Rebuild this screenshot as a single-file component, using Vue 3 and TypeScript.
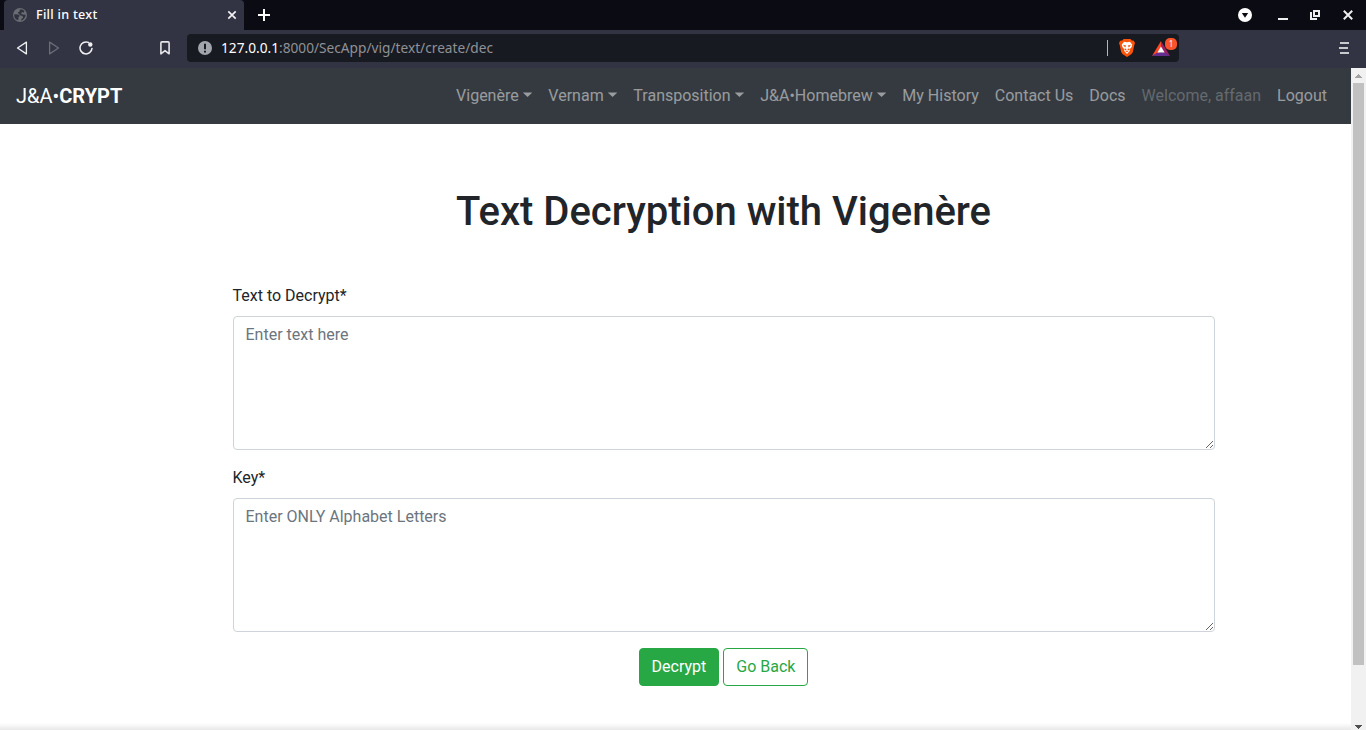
<script setup lang="ts">
import { ref } from 'vue'

interface NavItem {
  label: string
  dropdown?: boolean
  disabled?: boolean
}

const navItems: NavItem[] = [
  { label: 'Vigenère', dropdown: true },
  { label: 'Vernam', dropdown: true },
  { label: 'Transposition', dropdown: true },
  { label: 'J&A•Homebrew', dropdown: true },
  { label: 'My History' },
  { label: 'Contact Us' },
  { label: 'Docs' },
  { label: 'Welcome, affaan', disabled: true },
  { label: 'Logout' },
]

const cipherText = ref('')
const key = ref('')
</script>

<template>
  <div class="window">
    <div class="tabstrip">
      <div class="tab">
        <svg class="globe" width="14" height="14" viewBox="0 0 14 14">
          <circle cx="7" cy="7" r="7" fill="#6a6c72" />
          <path d="M1.3 6.2 L5.3 6.4 L6.8 8.1 L5.3 9.2 L5.6 11.6 L4.1 12.1 C2 11 .9 8.6 1.3 6.2Z M6.8 1.4 L9.5 1.5 L11.4 3 L10.8 4.7 L9.2 4.1 L8 5.5 L9.6 6.4 L12.7 6.8 C12.6 9.7 10.5 12.1 7.8 12.7 L8.6 11 L10.2 9.6 L9.5 8 L7 7.2 L5.8 5.7 L4.7 4.6 L6.6 3.6Z" fill="#30323f" />
        </svg>
        <span class="tab-title">Fill in text</span>
        <svg class="tab-close" width="10" height="10" viewBox="0 0 10 10"><path d="M1.3 1.3 L8.7 8.7 M8.7 1.3 L1.3 8.7" stroke="#f0f0f2" stroke-width="1.7" /></svg>
      </div>
      <svg class="new-tab" width="12" height="12" viewBox="0 0 12 12"><path d="M6 0 V12 M0 6 H12" stroke="#fff" stroke-width="2" /></svg>
      <div class="controls">
        <svg width="14" height="14" viewBox="0 0 14 14"><circle cx="7" cy="7" r="7" fill="#fff" /><path d="M3.8 5 H10.2 L7 9.8Z" fill="#0b0b14" /></svg>
        <svg class="c-min" width="10" height="14" viewBox="0 0 10 14"><path d="M0 11 H10" stroke="#eee" stroke-width="2" /></svg>
        <svg class="c-max" width="10" height="10" viewBox="0 0 10 10"><path d="M4 1 H9 V6 H4Z M1 2 V9 H7" fill="none" stroke="#eee" stroke-width="2" /></svg>
        <svg class="c-close" width="10" height="10" viewBox="0 0 10 10"><path d="M.8 .8 L9.2 9.2 M9.2 .8 L.8 9.2" stroke="#eee" stroke-width="2" /></svg>
      </div>
    </div>

    <div class="toolbar">
      <svg class="back" width="12" height="14" viewBox="0 0 12 14"><path d="M10.4 1.1 V12.9 L1.5 7Z" fill="none" stroke="#f0f0f2" stroke-width="1.3" stroke-linejoin="round" /></svg>
      <svg class="fwd" width="12" height="14" viewBox="0 0 12 14"><path d="M1.6 1.1 V12.9 L10.5 7Z" fill="none" stroke="#6a6c78" stroke-width="1.3" stroke-linejoin="round" /></svg>
      <svg class="reload" width="14" height="14" viewBox="0 0 14 14"><path d="M9.4 1.4 A6 6 0 1 0 13 7.4" fill="none" stroke="#f0f0f2" stroke-width="1.5" stroke-linecap="round" /><circle cx="11.3" cy="3.5" r="2.2" fill="#f0f0f2" /></svg>
      <svg class="bookmark" width="10" height="14" viewBox="0 0 10 14"><path d="M.9 1.9 Q.9 .9 1.9 .9 H8.1 Q9.1 .9 9.1 1.9 V12.8 L5 9.6 L.9 12.8Z" fill="none" stroke="#e5e5e9" stroke-width="1.6" stroke-linejoin="round" /></svg>
      <div class="address">
        <svg class="info" width="14" height="14" viewBox="0 0 14 14"><circle cx="7" cy="7" r="7" fill="#a3a5ad" /><path d="M7 2.7 V8.3 M7 9.8 V11.6" stroke="#181a21" stroke-width="2" /></svg>
        <span class="url"><span class="host">127.0.0.1</span>:8000/SecApp/vig/text/create/dec</span>
        <span class="sep"></span>
        <svg class="brave" width="16" height="18" viewBox="0 0 16 18">
          <path d="M4.6 0 H11.4 L12.8 1.5 L14.8 1.7 L16 4.1 L15.3 6 L13.9 12.8 Q13.5 14.2 12.2 15.2 L8 18 L3.8 15.2 Q2.5 14.2 2.1 12.8 L.7 6 L0 4.1 L1.2 1.7 L3.2 1.5Z" fill="#fb5409" />
          <path d="M5 2.7 L8 3.2 L11 2.7 L13.3 5.7 L12.5 8.2 L10.5 10.5 L11 11.8 L8 14.9 L5 11.8 L5.5 10.5 L3.5 8.2 L2.7 5.7Z" fill="#fff" />
          <path d="M3.9 5.8 L7.2 6.6 L6.2 8.4Z M12.1 5.8 L8.8 6.6 L9.8 8.4Z M5.6 9.4 L7.2 9.8 L7.4 11 L5.8 11.4Z M10.4 9.4 L8.8 9.8 L8.6 11 L10.2 11.4Z M6.6 12.2 L8 11.6 L9.4 12.2 L8 13.2Z" fill="#fb5409" />
        </svg>
        <div class="rewards">
          <svg width="18" height="15" viewBox="0 0 18 15">
            <path d="M9 0 L0 15 L9 10.8Z" fill="#ff4724" />
            <path d="M9 0 L18 15 L9 10Z" fill="#9e1f63" />
            <path d="M0 15 H18 L12.6 11.4 H5.4Z" fill="#662d91" />
            <path d="M9 5.4 L12.6 11.5 H5.4Z" fill="#fff" />
          </svg>
          <span class="badge">1</span>
        </div>
      </div>
      <svg class="menu" width="10" height="12" viewBox="0 0 10 12" shape-rendering="crispEdges"><path d="M1 1 H10 M0 6 H9 M1 11 H10" stroke="#c9cad0" stroke-width="2" /></svg>
    </div>

    <div class="viewport">
      <div class="page">
        <nav class="navbar">
          <a class="brand">J&amp;A•<b>CRYPT</b></a>
          <ul class="nav">
            <li v-for="item in navItems" :key="item.label" class="nav-link" :class="{ dropdown: item.dropdown, disabled: item.disabled }">{{ item.label }}</li>
          </ul>
        </nav>
        <main class="content">
          <h1>Text Decryption with Vigenère</h1>
          <form @submit.prevent>
            <label for="text">Text to Decrypt*</label>
            <textarea id="text" v-model="cipherText" placeholder="Enter text here" spellcheck="false"></textarea>
            <label for="key">Key*</label>
            <textarea id="key" v-model="key" placeholder="Enter ONLY Alphabet Letters" spellcheck="false"></textarea>
            <div class="actions">
              <button class="btn solid" type="submit">Decrypt</button>
              <button class="btn outline" type="button">Go Back</button>
            </div>
          </form>
        </main>
        <div class="bottom-shade"></div>
      </div>
      <div class="scrollbar">
        <svg width="15" height="15" viewBox="0 0 15 15" shape-rendering="crispEdges"><path d="M4 10 H11 L7.5 6Z" fill="#a3a3a3" /></svg>
        <div class="thumb"></div>
        <svg class="down" width="15" height="8" viewBox="0 0 15 8" shape-rendering="crispEdges"><path d="M4 3 H11 L7.5 7Z" fill="#505050" /></svg>
      </div>
    </div>
  </div>
</template>

<style>
body {
  margin: 0;
  overflow: hidden;
}
</style>

<style scoped>
* {
  box-sizing: border-box;
}
svg {
  display: block;
  flex: none;
}
.window {
  display: flex;
  flex-direction: column;
  width: 1366px;
  height: 730px;
  overflow: hidden;
  background: #fff;
  font-family: Roboto, sans-serif;
  color: #212529;
}
.tabstrip {
  display: flex;
  align-items: center;
  height: 30px;
  flex: none;
  padding-left: 4px;
  background: #0b0b14;
}
.tab {
  display: flex;
  align-items: center;
  width: 240px;
  height: 30px;
  padding: 0 7px 0 9px;
  border-radius: 4px 4px 0 0;
  background: #323443;
}
.tab-title {
  margin-left: 9px;
  font: 500 12.6px/18px 'Noto Sans', sans-serif;
  letter-spacing: 0.28px;
  color: #fff;
  white-space: nowrap;
}
.tab-close {
  margin-left: auto;
}
.new-tab {
  margin-left: 14px;
}
.controls {
  display: flex;
  align-items: center;
  margin-left: auto;
  padding-right: 13px;
}
.c-min {
  margin: 0 0 0 26px;
}
.c-max {
  margin-left: 22px;
}
.c-close {
  margin-left: 23px;
}
.toolbar {
  display: flex;
  align-items: center;
  height: 38px;
  flex: none;
  padding: 0 17px 2px 16px;
  background: #323443;
}
.fwd {
  margin-left: 20px;
}
.reload {
  margin-left: 19px;
}
.bookmark {
  margin-left: 67px;
}
.address {
  display: flex;
  align-items: center;
  width: 992px;
  height: 28px;
  margin-left: 17px;
  padding: 0 2px 0 11px;
  border-radius: 4px;
  background: #181a21;
}
.url {
  margin-left: 9px;
  font: 400 13.7px/20px 'Noto Sans', sans-serif;
  color: #8f9196;
  white-space: nowrap;
}
.host {
  color: #fff;
}
.sep {
  width: 1px;
  height: 16px;
  margin-left: auto;
  background: #b5b6bc;
}
.brave {
  margin-left: 11px;
}
.rewards {
  position: relative;
  width: 25px;
  height: 15px;
  margin-left: 17px;
}
.badge {
  position: absolute;
  top: -3px;
  left: 13px;
  width: 12px;
  height: 12px;
  border-radius: 5px;
  background: #fb542b;
  font: 8px/12px 'Noto Sans', sans-serif;
  color: #fff;
  text-align: center;
}
.menu {
  margin-left: auto;
}
.viewport {
  display: flex;
  flex: 1;
  min-height: 0;
}
.page {
  position: relative;
  display: flex;
  flex-direction: column;
  width: 1351px;
}
.navbar {
  display: flex;
  align-items: center;
  justify-content: space-between;
  height: 56px;
  padding: 0 16px;
  background: #343a40;
}
.brand {
  font-size: 20px;
  line-height: 30px;
  color: #fff;
}
.brand b {
  font-weight: 700;
}
.nav {
  display: flex;
  margin: 0;
  padding: 0;
  list-style: none;
}
.nav-link {
  padding: 8px;
  line-height: 24px;
  color: rgba(255, 255, 255, 0.5);
  white-space: nowrap;
}
.nav-link.disabled {
  color: rgba(255, 255, 255, 0.25);
}
.dropdown::after {
  content: '';
  display: inline-block;
  width: 9.6px;
  height: 4.6px;
  margin-left: 4.08px;
  vertical-align: 4px;
  background: currentColor;
  clip-path: polygon(0 0, 100% 0, 50% 100%);
}
.content {
  width: 982px;
  margin: 64px 0 0 232.5px;
}
h1 {
  margin: 0 0 48px;
  font-size: 40px;
  font-weight: 500;
  line-height: 48px;
  text-align: center;
}
label {
  display: block;
  margin-bottom: 8px;
  line-height: 24px;
}
textarea {
  display: block;
  width: 100%;
  height: 134px;
  margin: 0 0 16px;
  padding: 6px 12px;
  border: 1px solid #ced4da;
  border-radius: 4px;
  font: 16px/24px Roboto, sans-serif;
  resize: vertical;
}
textarea::placeholder {
  color: #6c757d;
}
.actions {
  display: flex;
  justify-content: center;
  gap: 4px;
}
.btn {
  height: 38px;
  padding: 6px 12px;
  border: 1px solid #28a745;
  border-radius: 4px;
  font: 16px/24px Roboto, sans-serif;
}
.solid {
  background: #28a745;
  color: #fff;
}
.outline {
  background: transparent;
  color: #28a745;
}
.bottom-shade {
  position: absolute;
  right: 0;
  bottom: 0;
  left: 0;
  height: 7px;
  background: linear-gradient(rgba(0, 0, 0, 0), rgba(0, 0, 0, 0.09));
}
.scrollbar {
  display: flex;
  flex-direction: column;
  width: 15px;
  background: #f1f1f1;
}
.thumb {
  width: 11px;
  height: 582px;
  margin-left: 2px;
  background: #c1c1c1;
}
.down {
  margin-top: auto;
}
</style>
